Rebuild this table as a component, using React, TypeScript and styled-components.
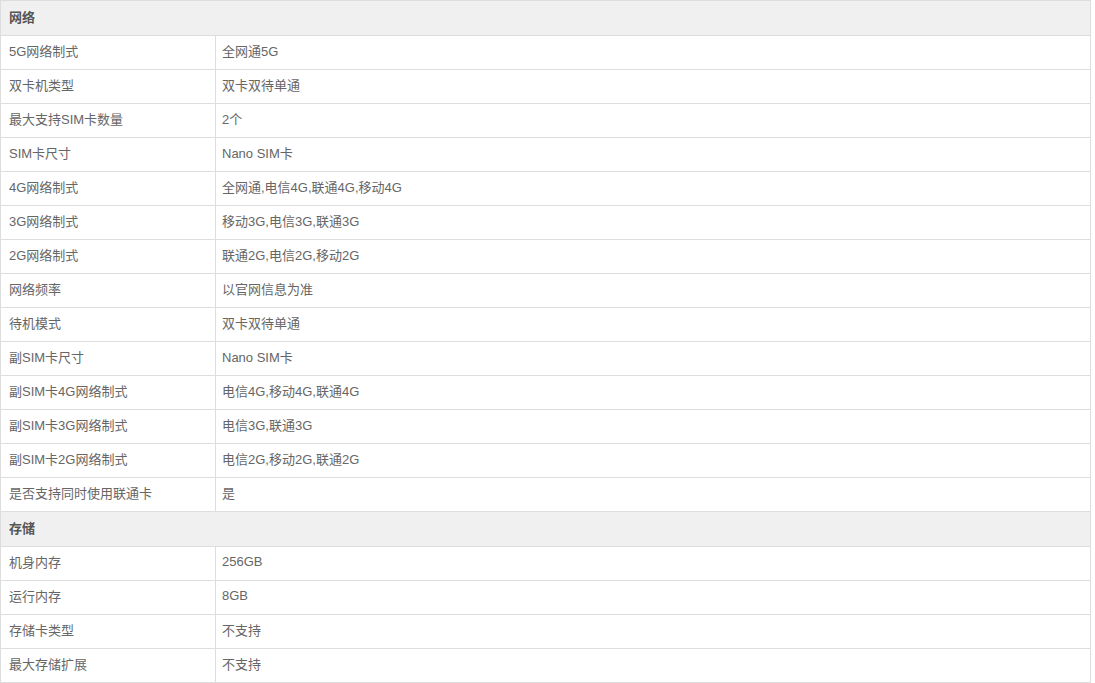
import React from "react";
import styled, { createGlobalStyle } from "styled-components";

const Global = createGlobalStyle`
  html, body { margin: 0; padding: 0; background: #fff; }
  body { font-family: "Liberation Sans", "Noto Sans CJK SC", sans-serif; }
`;

const Table = styled.table`
  width: 1091px;
  border-collapse: collapse;
  font-size: 13px;
  color: #666;
  table-layout: fixed;
`;

const Row = styled.tr`
  height: 34px;
`;

const SectionRow = styled.tr`
  height: 35px;
`;

const SectionCell = styled.th`
  background: #f0f0f0;
  border: 1px solid #ddd;
  text-align: left;
  padding: 0 8px 4px;
  height: 30px;
  font-weight: bold;
  color: #555;
`;

const KeyCell = styled.td`
  border: 1px solid #ddd;
  padding: 0 8px 4px;
  height: 29px;
  white-space: nowrap;
`;

const ValueCell = styled.td`
  border: 1px solid #ddd;
  padding: 0 6px 4px;
  height: 29px;
  white-space: nowrap;
`;

type Section = { title: string; rows: [string, string][] };

const data: Section[] = [
  {
    title: "网络",
    rows: [
      ["5G网络制式", "全网通5G"],
      ["双卡机类型", "双卡双待单通"],
      ["最大支持SIM卡数量", "2个"],
      ["SIM卡尺寸", "Nano SIM卡"],
      ["4G网络制式", "全网通,电信4G,联通4G,移动4G"],
      ["3G网络制式", "移动3G,电信3G,联通3G"],
      ["2G网络制式", "联通2G,电信2G,移动2G"],
      ["网络频率", "以官网信息为准"],
      ["待机模式", "双卡双待单通"],
      ["副SIM卡尺寸", "Nano SIM卡"],
      ["副SIM卡4G网络制式", "电信4G,移动4G,联通4G"],
      ["副SIM卡3G网络制式", "电信3G,联通3G"],
      ["副SIM卡2G网络制式", "电信2G,移动2G,联通2G"],
      ["是否支持同时使用联通卡", "是"],
    ],
  },
  {
    title: "存储",
    rows: [
      ["机身内存", "256GB"],
      ["运行内存", "8GB"],
      ["存储卡类型", "不支持"],
      ["最大存储扩展", "不支持"],
    ],
  },
];

export default function App() {
  return (
    <>
      <Global />
      <Table>
        <colgroup>
          <col style={{ width: 215 }} />
          <col />
        </colgroup>
        <tbody>
          {data.map((s) => (
            <React.Fragment key={s.title}>
              <SectionRow>
                <SectionCell colSpan={2}>{s.title}</SectionCell>
              </SectionRow>
              {s.rows.map(([k, v]) => (
                <Row key={k}>
                  <KeyCell>{k}</KeyCell>
                  <ValueCell>{v}</ValueCell>
                </Row>
              ))}
            </React.Fragment>
          ))}
        </tbody>
      </Table>
    </>
  );
}
